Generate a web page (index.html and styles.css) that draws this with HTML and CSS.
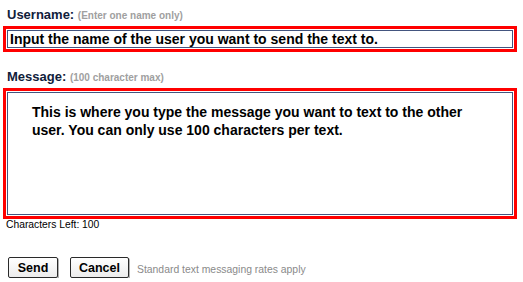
FILE: index.html
```html
<!DOCTYPE html>
<html>
<head>
<meta charset="utf-8">
<link rel="stylesheet" href="styles.css">
</head>
<body>
<form class="form">
  <label class="label">Username: <span class="hint">(Enter one name only)</span></label>
  <div class="frame">
    <input class="field" type="text" value="Input the name of the user you want to send the text to.">
  </div>
  <label class="label label-msg">Message: <span class="hint">(100 character max)</span></label>
  <div class="frame">
    <textarea class="area">This is where you type the message you want to text to the other user. You can only use 100 characters per text.</textarea>
  </div>
  <div class="count">Characters Left: 100</div>
  <div class="actions">
    <button type="button" class="btn btn-send">Send</button>
    <button type="button" class="btn btn-cancel">Cancel</button>
    <span class="note">Standard text messaging rates apply</span>
  </div>
</form>
</body>
</html>
```
FILE: styles.css
```css
html, body {
  margin: 0;
  padding: 0;
  background: #fff;
}
body {
  font-family: "Liberation Sans", Arial, sans-serif;
  color: #000;
}
.form {
  display: flex;
  flex-direction: column;
  padding: 6px 6px 0 3px;
  width: 514px;
}
.label {
  display: block;
  font-size: 13px;
  font-weight: bold;
  color: #10203a;
  margin-left: 4px;
  line-height: 17px;
  height: 17px;
}
.label-msg {
  margin-top: 16px;
}
.hint {
  font-size: 10px;
  font-weight: bold;
  color: #a0a0a0;
}
.frame {
  border: 3px solid #ff0000;
  padding: 1px;
  background: #fff;
  margin-top: 3px;
}
.field {
  display: block;
  box-sizing: border-box;
  width: 100%;
  height: 18px;
  margin: 0;
  border: 1px solid #43557f;
  padding: 0 2px;
  font-family: "Liberation Sans", Arial, sans-serif;
  font-size: 14px;
  font-weight: bold;
  color: #000;
  outline: none;
}
.area {
  display: block;
  box-sizing: border-box;
  width: 100%;
  height: 123px;
  margin: 0;
  border: 1px solid #43557f;
  padding: 10px 36px 0 24px;
  font-family: "Liberation Sans", Arial, sans-serif;
  font-size: 14px;
  font-weight: bold;
  line-height: 18px;
  color: #000;
  resize: none;
  overflow: hidden;
  outline: none;
}
.count {
  font-size: 10.3px;
  margin-left: 3px;
  line-height: 12px;
  color: #000;
}
.actions {
  display: flex;
  align-items: center;
  margin-top: 26px;
  margin-left: 5px;
}
.btn {
  box-sizing: border-box;
  height: 21px;
  padding: 0 4px;
  border: 1px solid #2a2a2a;
  border-radius: 2px;
  background: linear-gradient(#ffffff, #ececec);
  font-family: "Liberation Sans", Arial, sans-serif;
  font-size: 12.5px;
  font-weight: bold;
  color: #000;
  box-shadow: 1px 1px 0 #b0b0b0;
}
.btn-send {
  width: 50px;
}
.btn-cancel {
  width: 59px;
  margin-left: 12px;
}
.note {
  margin-left: 8px;
  margin-top: 3px;
  font-size: 10.4px;
  color: #8a8a8a;
}
```
